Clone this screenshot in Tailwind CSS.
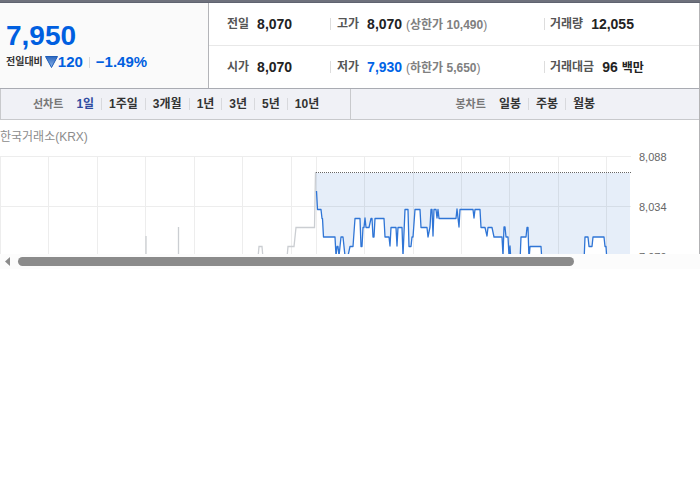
<!DOCTYPE html>
<html lang="ko">
  <head>
    <meta charset="utf-8" />
    <title>한국거래소(KRX)</title>
    <script src="https://cdn.jsdelivr.net/npm/@tailwindcss/browser@4"></script>
  </head>

  <body class="bg-white font-['Liberation_Sans','Noto_Sans_CJK_KR',sans-serif] text-[#222]">
    <main class="border-r border-[#b3b3b5]">
      <!-- top bar -->
      <div class="-mr-px h-[3px] border-b border-[#5f6370] bg-[#6e717c]"></div>

      <!-- price summary -->
      <section class="flex h-[85px]">
        <div class="w-[209px] shrink-0 border-r border-[#b3b4b8] bg-[#fafafa] pt-[18px] pl-[6px]">
          <div class="text-[28px] leading-[30px] font-bold text-[#005fe0]">7,950</div>
          <div class="flex items-center text-[15px] leading-[22px] font-bold text-[#005fe0]">
            <span class="mr-[2px] text-[10px] text-[#333]">전일대비</span>
            <svg class="h-3 w-[13px]" viewBox="0 0 13 12">
              <defs>
                <linearGradient id="down" x1="0" y1="0" x2="0" y2="1">
                  <stop offset="0" stop-color="#2b66bd" />
                  <stop offset="1" stop-color="#8fb6ea" />
                </linearGradient>
              </defs>
              <path d="M.5 .5h12L6.500 11.500z" fill="url(#down)" stroke="#1d5cb8" />
            </svg>
            <span>120</span>
            <span class="mx-[6px] h-[11px] w-px bg-[#d9d9d9]"></span>
            <span>−1.49%</span>
          </div>
        </div>

        <dl class="grid flex-1 grid-cols-[121fr_214fr_155fr] grid-rows-[43px_42px] text-[14px] font-bold whitespace-nowrap">
          <div class="flex items-center gap-2 border-b border-[#e8e8e8] pl-[18px]">
            <dt class="text-[12px] text-[#555]">전일</dt>
            <dd>8,070</dd>
          </div>
          <div class="flex items-center border-b border-[#e8e8e8]">
            <span class="mr-[6px] h-3 w-px bg-[#ddd]"></span>
            <dt class="mr-2 text-[12px] text-[#555]">고가</dt>
            <dd>8,070 <span class="text-[12px] text-[#808080]"><span class="font-normal">(</span>상한가 10,490<span class="font-normal">)</span></span></dd>
          </div>
          <div class="flex items-center border-b border-[#e8e8e8]">
            <span class="mr-[5px] h-3 w-px bg-[#ddd]"></span>
            <dt class="mr-2 text-[12px] text-[#555]">거래량</dt>
            <dd>12,055</dd>
          </div>
          <div class="flex items-center gap-2 pl-[18px]">
            <dt class="text-[12px] text-[#555]">시가</dt>
            <dd>8,070</dd>
          </div>
          <div class="flex items-center">
            <span class="mr-[6px] h-3 w-px bg-[#ddd]"></span>
            <dt class="mr-2 text-[12px] text-[#555]">저가</dt>
            <dd><span class="text-[#0064e6]">7,930</span> <span class="text-[12px] text-[#808080]"><span class="font-normal">(</span>하한가 5,650<span class="font-normal">)</span></span></dd>
          </div>
          <div class="flex items-center">
            <span class="mr-[5px] h-3 w-px bg-[#ddd]"></span>
            <dt class="mr-2 text-[12px] text-[#555]">거래대금</dt>
            <dd>96 <span class="text-[12px]">백만</span></dd>
          </div>
        </dl>
      </section>

      <!-- chart period tabs -->
      <nav class="grid h-8 grid-cols-2 border-y border-t-[#a9abb2] border-b-[#c8c9cc] bg-[#f0f1f6] text-[12px] font-bold whitespace-nowrap text-[#333]">
        <div class="flex items-center border-l border-[#c8c9cc] pl-8">
          <span class="mr-[6px] text-[11px] text-[#777]">선차트</span>
          <button type="button" class="px-[7px] leading-3 text-[#2f4ba0]">1일</button>
          <button type="button" class="border-l border-[#d8d9dd] px-[7px] leading-3">1주일</button>
          <button type="button" class="border-l border-[#d8d9dd] px-[7px] leading-3">3개월</button>
          <button type="button" class="border-l border-[#d8d9dd] px-[7px] leading-3">1년</button>
          <button type="button" class="border-l border-[#d8d9dd] px-[7px] leading-3">3년</button>
          <button type="button" class="border-l border-[#d8d9dd] px-[7px] leading-3">5년</button>
          <button type="button" class="border-l border-[#d8d9dd] px-[7px] leading-3">10년</button>
        </div>
        <div class="flex items-center border-l border-[#c8c9cc] pl-[105px]">
          <span class="mr-[6px] text-[11px] text-[#777]">봉차트</span>
          <button type="button" class="px-[7px] leading-3">일봉</button>
          <button type="button" class="border-l border-[#d8d9dd] px-[7px] leading-3">주봉</button>
          <button type="button" class="border-l border-[#d8d9dd] px-[7px] leading-3">월봉</button>
        </div>
      </nav>

      <!-- chart -->
      <h2 class="h-[30px] pt-2 text-[12px] leading-[18px] text-[#8c8c8c]">한국거래소(KRX)</h2>
      <svg class="block h-auto w-full" viewBox="0 150 699 104">
        <path
          fill="#e6eef9"
          d="M316 173V191L317 209H321L322 218L323 237H335L336 256L337 246H338L339 256L341 237H343L345 256H348L350 246H353L355 218H360L361 246H362L363 227H364L365 218L366 227H369L371 218H372L373 237H374L375 218H384L385 237H389L390 246L391 227H396L397 246L398 227H402L403 256L405 209H408L409 246H411L412 237H413L415 209H420L421 227H427L428 237L430 227L431 209H432L433 236L434 209H436L437 218L438 209L439 218H456L457 209L458 218L459 227L460 209H473L474 218L475 209H480L481 227H485L487 236L488 227H492L494 237H502L503 256L504 227H505L506 237H508L509 256L510 246L511 262H520L521 237H526L527 227H528L529 260L530 246H541L542 262H584L585 237H588L589 246H592L593 237H604L605 246H606L607 262H630V173z"
        />
        <path
          fill="none"
          stroke="#000"
          stroke-opacity=".07"
          shape-rendering="crispEdges"
          d="M0 156.500H631M0 206.500H631M.5 156V254M48.500 156V254M97.500 156V254M145.500 156V254M194.500 156V254M242.500 156V254M291.500 156V254M316.500 156V254M364.500 156V254M413.500 156V254M461.500 156V254M509.500 156V254M558.500 156V254M606.500 156V254"
        />
        <path
          fill="none"
          stroke="#cbced2"
          stroke-width="1.3"
          d="M146 236V254M178.500 227V254M258 258L259 246.500H262L263 258M287 258L288 246.500H294L296 227.500H314.500L315.500 172"
        />
        <path stroke="#666" stroke-dasharray="1 1" d="M316 172.500H631" />
        <path
          fill="none"
          stroke="#2f75d6"
          stroke-width="1.3"
          stroke-linejoin="round"
          d="M316.500 191L317.500 209.500H321L322 218.500H322.500L323.500 237H335L336 256L337 246.500H338L339 256L341 237H343L345 256H348L350 246.500H353L355 218.500H360L361 246.500H362L363 227.500H364L365 218L366 227.500H369L371 218.500H372L373 237H374L375 218.500H384L385 237H389L390 246L391 227.500H396L397 246L398 227.500H402L403 256L405 209.500H408L409 246.500H411L412 237H413L415 209.500H420L421 227.500H427L428 237L430 227L431 209.500H432L433 236L434 209.500H436L437 218L438 209.500L439 218.500H456L457 209L458 218L459 227L460 209.500H473L474 218L475 209.500H480L481 227.500H485L487 236L488 227.500H492L494 237H502L503 256L504 227H505L506 237H508L509 256L510 246L511 262H520L521 237H526L527 227.500H528L529 260L530 246.500H541L542 262H584L585 237H588L589 246.500H592L593 237H604L605 246.500H606L607 262"
        />
        <g class="text-[11px]" fill="#666">
          <text x="639" y="161">8,088</text>
          <text x="639" y="211">8,034</text>
          <text x="639" y="261">7,979</text>
        </g>
      </svg>
    </main>

    <!-- horizontal scrollbar -->
    <div class="flex h-[15px] items-center gap-2 bg-[#fcfcfc] pl-[5px]">
      <svg class="h-[9px] w-[5px]" viewBox="0 0 5 9"><path d="M5 0V9L0 4.500z" fill="#8b8b8b" /></svg>
      <div class="h-[9px] w-4/5 rounded-full bg-[#8b8b8b]"></div>
    </div>
  </body>
</html>
